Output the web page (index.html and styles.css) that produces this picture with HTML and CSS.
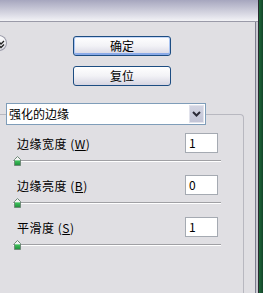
FILE: index.html
```html
<!DOCTYPE html>
<html>

<head>
  <title>强化的边缘</title>
  <link rel="stylesheet" href="styles.css">
</head>

<body>
  <div class="window">
    <div class="titlebar"></div>
    <div class="content">
      <div class="panel">
        <div class="top">
          <div class="collapse">
            <svg width="16" height="16" viewBox="0 0 16 16"><path d="M7 6 L10 9 L13 6 M7 9.5 L10 12.5 L13 9.5" fill="none" stroke="#222" stroke-width="1.3"/></svg>
          </div>
          <div class="buttons">
            <button class="btn btn-default">确定</button>
            <button class="btn">复位</button>
          </div>
        </div>

        <div class="select">
          <span class="select-text">强化的边缘</span>
          <span class="select-arrow">
            <svg width="9" height="6" viewBox="0 0 9 6"><path d="M1 1 L4.5 4.5 L8 1" fill="none" stroke="#2b2b38" stroke-width="2"/></svg>
          </span>
        </div>

        <div class="group">
          <div class="row">
            <span class="label">边缘宽度 (<u>W</u>)</span>
            <span class="field">1</span>
          </div>
          <div class="slider">
            <svg class="thumb" width="7" height="10" viewBox="0 0 7 10"><path d="M3.5 0.5 L6.5 3.5 L6.5 9.5 L0.5 9.5 L0.5 3.5 Z" fill="url(#g)" stroke="#6f8a78"/><defs><linearGradient id="g" x1="0" y1="0" x2="0" y2="1"><stop offset="0.35" stop-color="#f4f4f4"/><stop offset="0.5" stop-color="#3cc05a"/><stop offset="1" stop-color="#1f8a3a"/></linearGradient></defs></svg>
          </div>

          <div class="row">
            <span class="label">边缘亮度 (<u>B</u>)</span>
            <span class="field">0</span>
          </div>
          <div class="slider">
            <svg class="thumb" width="7" height="10" viewBox="0 0 7 10"><path d="M3.5 0.5 L6.5 3.5 L6.5 9.5 L0.5 9.5 L0.5 3.5 Z" fill="url(#g)" stroke="#6f8a78"/></svg>
          </div>

          <div class="row">
            <span class="label">平滑度 (<u>S</u>)</span>
            <span class="field">1</span>
          </div>
          <div class="slider">
            <svg class="thumb" width="7" height="10" viewBox="0 0 7 10"><path d="M3.5 0.5 L6.5 3.5 L6.5 9.5 L0.5 9.5 L0.5 3.5 Z" fill="url(#g)" stroke="#6f8a78"/></svg>
          </div>
        </div>
      </div>
      <div class="strip"></div>
    </div>
  </div>
  <div class="frame"></div>
  <div class="desk"></div>
</body>

</html>
```

FILE: styles.css
```css
body {
  margin: 0;
  height: 293px;
  overflow: hidden;
  display: flex;
  font-family: "Noto Sans CJK SC", "Liberation Sans", sans-serif;
  font-size: 12px;
  color: #000;
  background-color: #1c5330;
}

.window {
  width: 258px;
  display: flex;
  flex-direction: column;
  overflow: hidden;
}

.titlebar {
  height: 21px;
  background: linear-gradient(#a6a6be, #d4d4e0 60%, #f2f2f6);
  border-bottom: 1px solid #9a9aa8;
}

.content {
  flex: 1;
  display: flex;
}

.panel {
  flex: 1;
  display: flex;
  flex-direction: column;
  background-color: #e0dfe3;
  border-right: 1px solid #7e7e8e;
  overflow: hidden;
}

.strip {
  width: 2px;
  background-color: #c9c9d2;
}

.frame {
  width: 1px;
  background-color: #2a2a30;
}

.desk {
  flex: 1;
  background: linear-gradient(90deg, #1e6a3a, #14452a);
}

/* 위쪽 버튼들 */
.top {
  display: flex;
  align-items: flex-start;
  padding-top: 13px;
}

.collapse {
  width: 16px;
  height: 16px;
  margin-left: -9px;
  border-radius: 50%;
  box-shadow: inset 0 0 0 1px #9a9aa8;
  background: linear-gradient(#ffffff, #dcdce4);
}

.collapse svg {
  display: block;
}

.buttons {
  display: flex;
  flex-direction: column;
  gap: 10px;
  margin-left: 66px;
  margin-top: 1px;
}

.btn {
  width: 98px;
  height: 20px;
  padding: 0;
  border: 1px solid #1d4d82;
  border-radius: 3px;
  background: linear-gradient(#ffffff, #f2f2f6 50%, #d6d5e2);
  font-family: "Noto Sans CJK SC", sans-serif;
  font-size: 12px;
  line-height: 18px;
  color: #000;
}

.btn-default {
  box-shadow: inset 0 1px 0 #c6d8f8, inset 1px 0 0 #a9c4f2, inset -1px 0 0 #a9c4f2, inset 0 -2px 0 #8aaae8;
}

/* 드롭다운 */
.select {
  position: relative;
  z-index: 1;
  display: flex;
  justify-content: space-between;
  width: 198px;
  height: 20px;
  margin: 17px 0 0 6px;
  border: 1px solid #7f9db9;
  background-color: #fff;
}

.select-text {
  padding-left: 2px;
  line-height: 20px;
  font-size: 12px;
}

.select-arrow {
  width: 15px;
  height: 18px;
  margin: 1px;
  display: flex;
  align-items: center;
  justify-content: center;
  background: linear-gradient(#d2d4e2, #c2c4d6);
  border: 1px solid #e2e3ec;
  box-sizing: border-box;
}

/* 그룹 박스 */
.group {
  flex: 1;
  width: 245px;
  margin: -11px 0 0 -2px;
  padding-top: 18px;
  border-top: 1px solid #b8b8c0;
  border-right: 1px solid #b8b8c0;
  border-radius: 0 4px 0 0;
}

.row {
  display: flex;
  justify-content: space-between;
  align-items: center;
  height: 20px;
  padding: 0 25px 0 19px;
}

.label {
  letter-spacing: 0.5px;
}

.field {
  width: 28px;
  height: 18px;
  padding-left: 3px;
  border: 1px solid #a5aab2;
  background-color: #fff;
  line-height: 18px;
}

.slider {
  width: 208px;
  height: 10px;
  margin: 3px 0 9px 15px;
  background: linear-gradient(to bottom, transparent 4px, #a0a0a4 4px, #a0a0a4 5px, #ffffff 5px, #ffffff 6px, transparent 6px);
}

.thumb {
  display: block;
  margin-left: 1px;
}
```
